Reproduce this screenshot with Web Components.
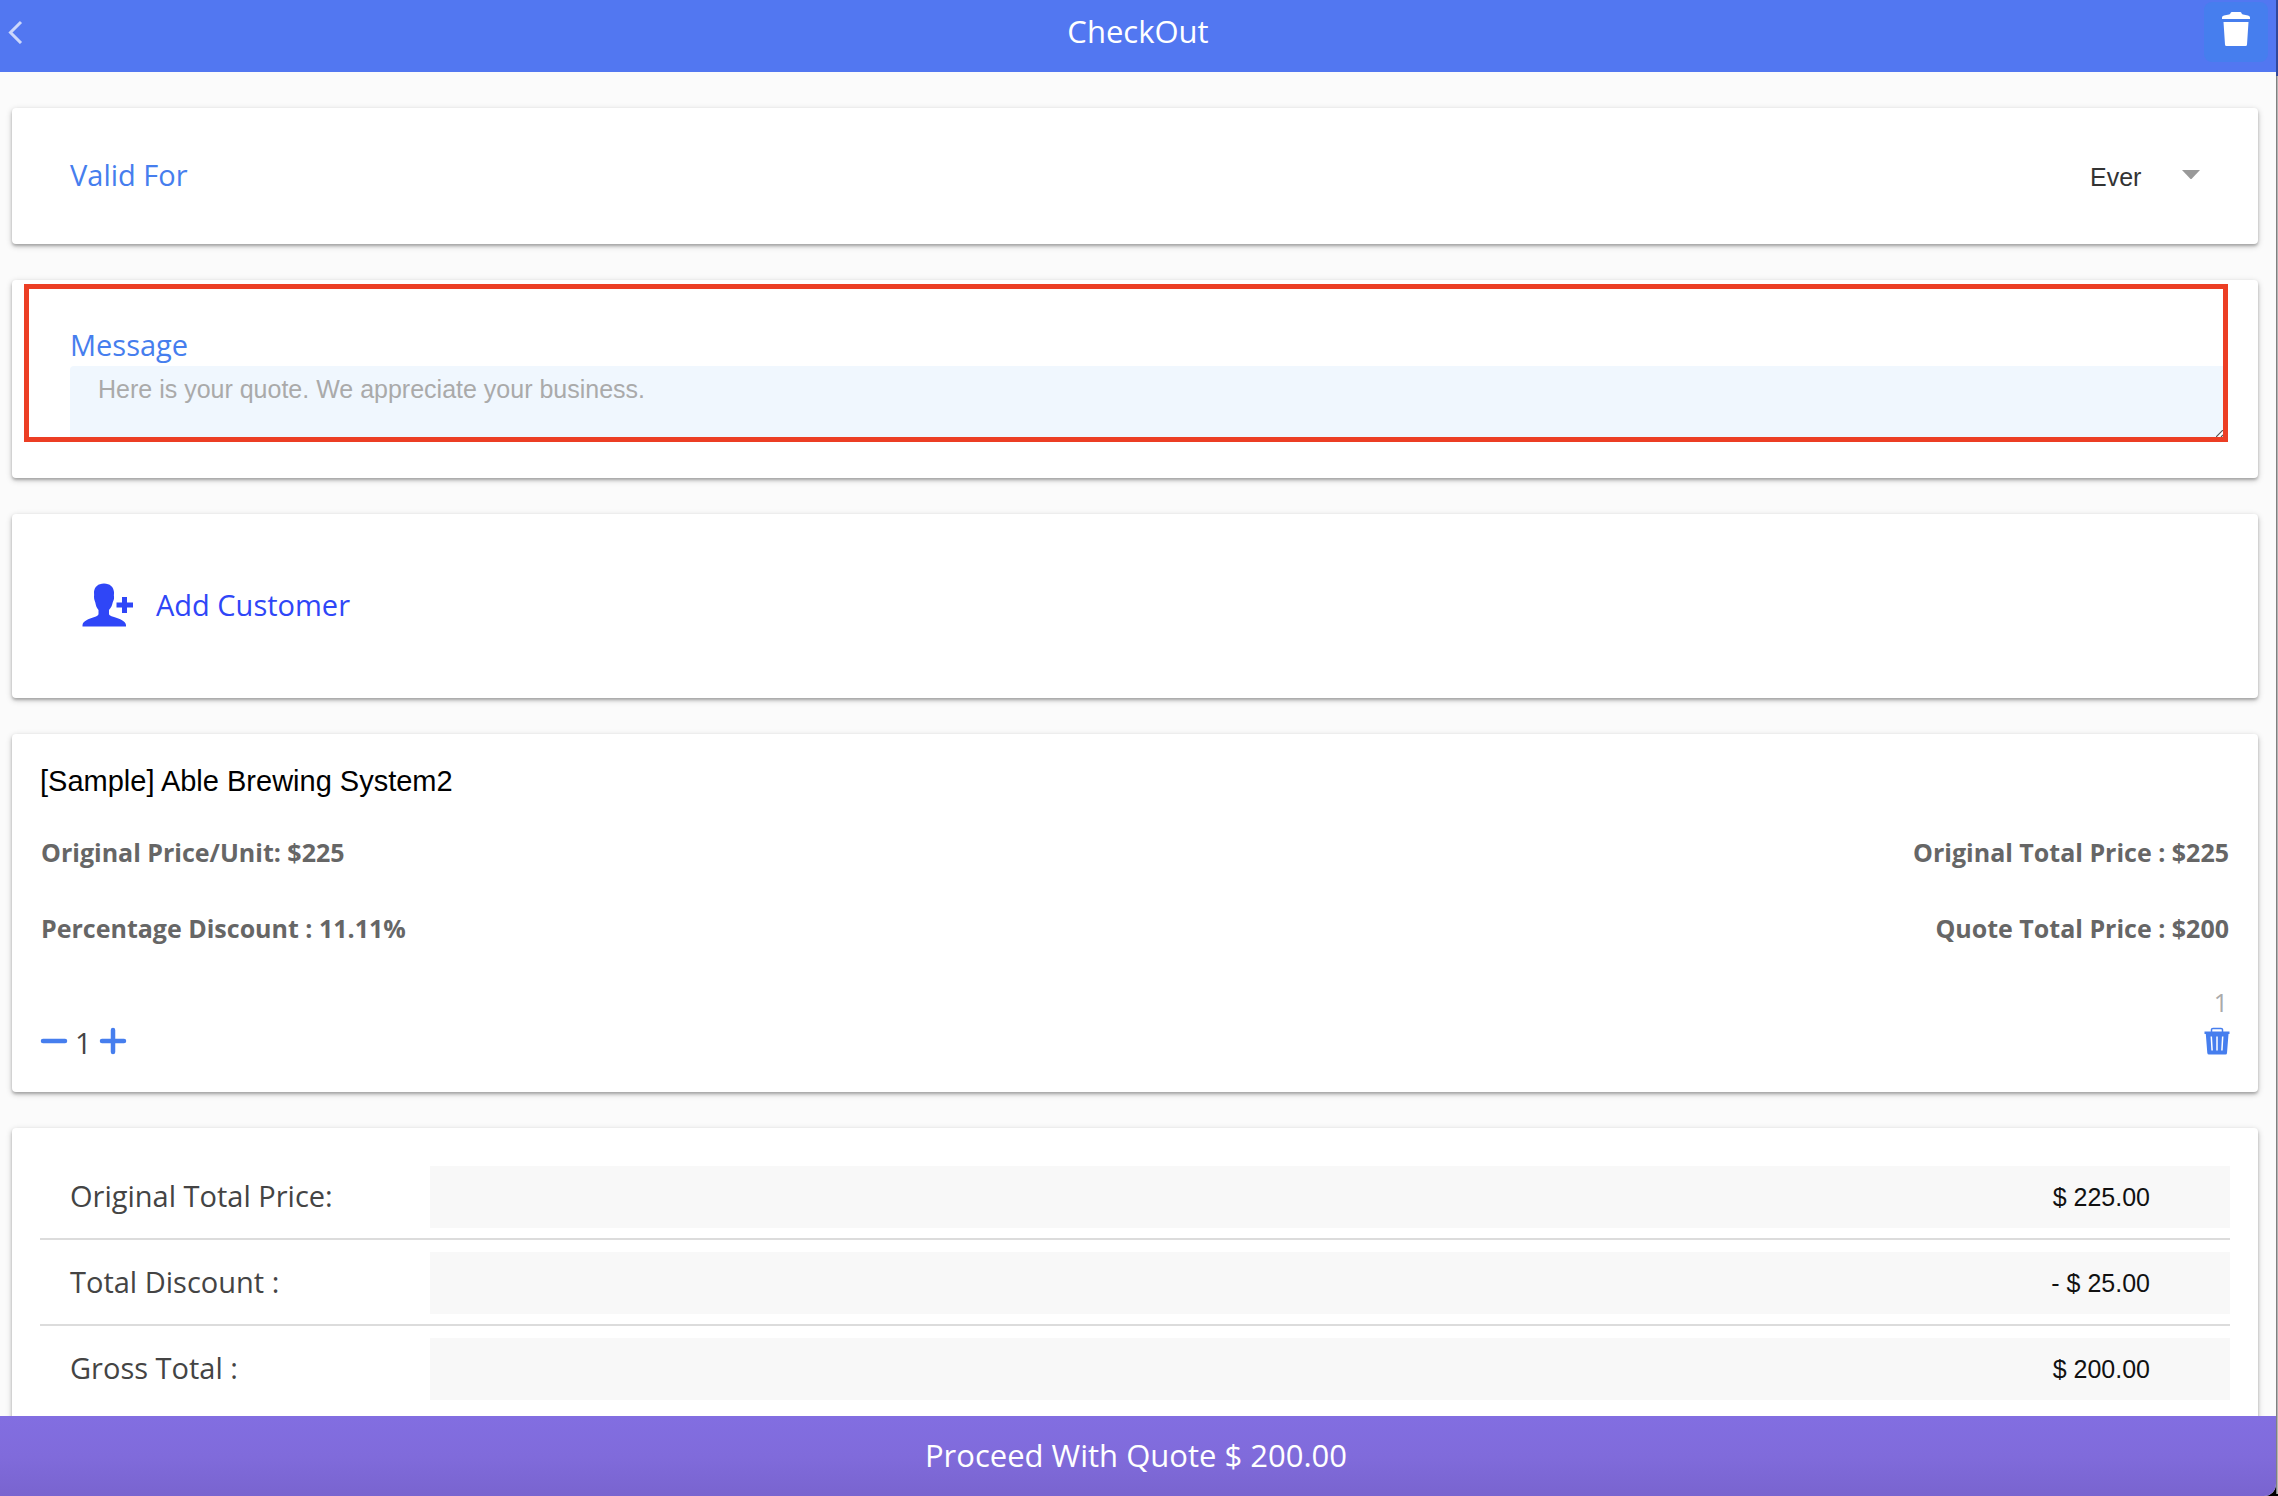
<!DOCTYPE html>
<html lang="en">
<head>
<meta charset="utf-8">
<title>CheckOut</title>
<style>
  html, body { margin: 0; height: 100%; background: #fbfbfb; }
  body { font-family: "Open Sans", sans-serif; font-size: 29px; line-height: 40px; color: #444; --accent: #467eee; --plain: "Liberation Sans", Arial, sans-serif; }
</style>
</head>
<body>
<checkout-app>
  <app-header slot="header">CheckOut</app-header>
  <quote-card>
    <valid-for></valid-for>
  </quote-card>
  <quote-card>
    <quote-message></quote-message>
  </quote-card>
  <quote-card>
    <add-customer>Add Customer</add-customer>
  </quote-card>
  <quote-card>
    <line-item quantity="1">
      <span slot="name">[Sample] Able Brewing System2</span>
      <span slot="unit">Original Price/Unit: $225</span>
      <span slot="total">Original Total Price : $225</span>
      <span slot="discount">Percentage Discount : 11.11%</span>
      <span slot="quote">Quote Total Price : $200</span>
    </line-item>
  </quote-card>
  <quote-card>
    <totals-list>
      <total-row label="Original Total Price:">$ 225.00</total-row>
      <total-row label="Total Discount :">- $ 25.00</total-row>
      <total-row label="Gross Total :">$ 200.00</total-row>
    </totals-list>
  </quote-card>
  <proceed-bar slot="footer">Proceed With Quote $ 200.00</proceed-bar>
</checkout-app>
<script>
const BASE = `<style>
  *, *::before { box-sizing: border-box; }
  :host { display: block; }
  button { appearance: none; border: 0; margin: 0; padding: 0; background: none; font: inherit; color: inherit; cursor: pointer; }
  svg { display: block; }
</style>`;
function define(name, html, setup) {
  const template = document.createElement('template');
  template.innerHTML = BASE + html;
  customElements.define(name, class extends HTMLElement {
    constructor() {
      super();
      this.attachShadow({ mode: 'open' }).append(template.content.cloneNode(true));
    }
    connectedCallback() { if (setup) setup(this, this.shadowRoot); }
  });
}

define('checkout-app', `<style>
  :host { display: grid; grid-template-columns: 1fr 2px; height: 100vh; overflow: hidden; background: #000; }
  .window { display: flex; flex-direction: column; min-width: 0; min-height: 0; background: #fbfbfb; border-bottom-right-radius: 12px; overflow: hidden; }
  main { flex: 1; min-height: 0; overflow: hidden; display: flex; flex-direction: column; gap: 36px; padding: 36px 18px 0 12px; }
  ::slotted(*) { flex: none; }
  .edge { margin-bottom: 2px; background: linear-gradient(#2f489c 76px, transparent 76px), linear-gradient(90deg, #808080 1px, #b4b4b4 1px); }
</style>
<div class="window"><slot name="header"></slot><main><slot></slot></main><slot name="footer"></slot></div>
<div class="edge"></div>`);

define('app-header', `<style>
  :host { display: block; background: #5277f1; color: #fff; }
  header { display: grid; grid-template-columns: 64px 1fr 64px; height: 72px; padding: 2px 8px 10px 8px; }
  h1 { margin: 0; font-size: 31px; font-weight: 400; line-height: 58px; text-align: center; }
  .trash { display: grid; place-items: center; background: var(--accent); border-radius: 8px; padding-bottom: 6px; }
  .back { justify-self: start; }
</style>
<header>
  <button class="back" aria-label="Back"><svg width="16" height="24" viewBox="0 0 16 24" fill="none" stroke="#ccd7fb" stroke-width="3"><path d="M13 2 2.500 12.500 13 23"/></svg></button>
  <h1><slot></slot></h1>
  <button class="trash" aria-label="Clear quote"><svg width="28" height="36" viewBox="0 0 28 36" fill="#fff"><path d="M0 8V6.500Q0 5 2 4.500L7 3.600Q8.500 3.200 8.500 2 9 1 10 1h8q1.200 0 1.500 1 0 1.200 1.500 1.600l5 .9q2 .5 2 2V8ZM1.500 11h25l-1.500 22.500Q25 35 23.500 35h-19Q3 35 3 33.500Z"/></svg></button>
</header>`);

define('quote-card', `<style>
  :host { display: block; background: #fff; border-radius: 4px; box-shadow: 0 2px 6px rgba(0,0,0,.22), 0 2px 3px rgba(0,0,0,.22); }
</style><slot></slot>`);

define('valid-for', `<style>
  :host { display: flex; align-items: center; justify-content: space-between; padding: 47px 58px; color: var(--accent); }
  label { padding-bottom: 2px; }
  .pick { display: grid; align-items: center; justify-items: end; }
  .pick > * { grid-area: 1 / 1; }
  select { appearance: none; border: 0; margin: 0; padding: 2px 58px 0 0; background: none; color: #333; font: 25px/40px var(--plain); }
  svg { pointer-events: none; }
</style>
<label for="period">Valid For</label>
<div class="pick">
  <select id="period"><option>Ever</option></select>
  <svg width="18" height="14" viewBox="0 0 18 14" fill="#999"><path d="M0 1h18L9.500 10h-1Z"/></svg>
</div>`);

define('quote-message', `<style>
  :host { display: block; position: relative; padding: 46px 30px 36px 58px; }
  label { display: block; line-height: 38px; padding-bottom: 2px; color: var(--accent); }
  textarea { display: block; width: 100%; height: 76px; margin: 0; padding: 8px 28px; border: 0; border-radius: 4px; background: #f0f7fe; color: #333; font: 25px/30px var(--plain); resize: vertical; }
  textarea::placeholder { color: #aaa; opacity: 1; }
  .highlight { position: absolute; inset: 4px 30px 36px 12px; border: 5px solid #ec3e24; pointer-events: none; display: flex; align-items: flex-end; justify-content: flex-end; }
</style>
<label for="message">Message</label>
<textarea id="message" placeholder="Here is your quote. We appreciate your business."></textarea>
<div class="highlight"><svg width="7" height="7" viewBox="0 0 7 7"><path d="M7 0V7H0Z" fill="#fff"/><path d="M0 7 7 0M5 7 7 5" stroke="#555" stroke-width="1.200"/></svg></div>`);

define('add-customer', `<style>
  :host { display: block; padding: 65px 70px 67px; color: #2f46f7; }
  button { display: flex; align-items: center; gap: 23px; height: 52px; }
</style>
<button>
  <svg width="51" height="44" viewBox="0 0 51 44" fill="currentColor"><path d="M22 .5C28 .5 31.500 4 32 9c.2 2-.3 3 0 4.500.4 3-.8 4-1.300 6-.7 3.500-1.700 5-3.700 7.500V31c0 1.500 3 2.300 5 3 6 2 11.500 4 12 8v1.500H.500V42c.5-4 6-6 12-8 2-.7 4-1.500 4-3v-4c-2-2.500-2.500-4-3.200-7.500-.5-2-1.300-3-1.300-6 .3-1.500 0-2.500 0-4.500C12.500 4 16 .5 22 .5ZM40 14h5v5.500h6v5h-6V30h-5v-5.500h-5.500v-5H40Z"/></svg>
  <span><slot></slot></span>
</button>`);

define('line-item', `<style>
  :host { display: block; padding: 27px 28px 32px; }
  h2 { margin: 0 0 13px; font: 29px/40px var(--plain); color: #000; }
  .prices { display: grid; grid-template-columns: auto auto; justify-content: space-between; font-size: 25px; font-weight: 700; line-height: 76px; color: #666; padding: 0 1px; }
  .prices > :nth-child(even) { text-align: right; }
  .count { margin-top: 20px; padding-right: 2px; line-height: 32px; font-size: 25px; color: #aaa; text-align: right; }
  .actions { display: flex; align-items: center; justify-content: space-between; height: 42px; padding-top: 3px; }
  .stepper { display: flex; align-items: center; gap: 7px; line-height: 32px; }
  .stepper output { padding-top: 4px; }
  .actions button { color: var(--accent); }
</style>
<h2><slot name="name"></slot></h2>
<div class="prices">
  <div><slot name="unit"></slot></div><div><slot name="total"></slot></div>
  <div><slot name="discount"></slot></div><div><slot name="quote"></slot></div>
</div>
<div class="count"></div>
<div class="actions">
  <div class="stepper">
    <button aria-label="Decrease"><svg width="28" height="28" viewBox="0 0 28 28" stroke="currentColor" stroke-width="4.500" stroke-linecap="round"><path d="M3 14h22"/></svg></button>
    <output></output>
    <button aria-label="Increase"><svg width="28" height="28" viewBox="0 0 28 28" stroke="currentColor" stroke-width="4.500" stroke-linecap="round"><path d="M3 14h22M14 3v22"/></svg></button>
  </div>
  <button aria-label="Remove item"><svg width="26" height="28" viewBox="0 0 26 28"><path d="M7.500 5V2.500Q7.500 1.500 9 1.500h8q1.500 0 1.500 1V5" fill="none" stroke="currentColor" stroke-width="1.500"/><path fill="currentColor" d="M.5 4.500h25V7h-1l-1.500 19Q23 27.500 21.500 27.500H5Q3.500 27.500 3.300 26L1.800 7H.5Z"/><path d="M7.300 9.500l.8 14M13 9.500v14M18.700 9.500l-.8 14" stroke="#fff" stroke-width="1.500"/></svg></button>
</div>`, (host, root) => {
  const quantity = host.getAttribute('quantity');
  root.querySelector('.count').textContent = quantity;
  root.querySelector('output').textContent = quantity;
});

define('totals-list', `<style>
  :host { display: block; padding: 26px 28px; }
  ::slotted(:not(:last-child)) { border-bottom: 2px solid #dcdcdc; }
</style><slot></slot>`);

define('total-row', `<style>
  :host { display: flex; align-items: center; padding: 12px 0 10px; }
  label { flex: 0 0 390px; padding: 0 0 2px 30px; }
  output { flex: 1; padding-right: 80px; background: #f8f8f8; color: #111; font: 25px/62px var(--plain); text-align: right; }
</style>
<label for="value"></label><output id="value"><slot></slot></output>`, (host, root) => {
  root.querySelector('label').textContent = host.getAttribute('label');
});

define('proceed-bar', `<style>
  button { display: block; width: 100%; height: 80px; padding: 0 4px 2px 0; background: linear-gradient(#826ee1, #806bdb 50%, #7964cf); color: #fff; font-size: 31px; text-align: center; }
</style><button><slot></slot></button>`);
</script>
</body>
</html>
